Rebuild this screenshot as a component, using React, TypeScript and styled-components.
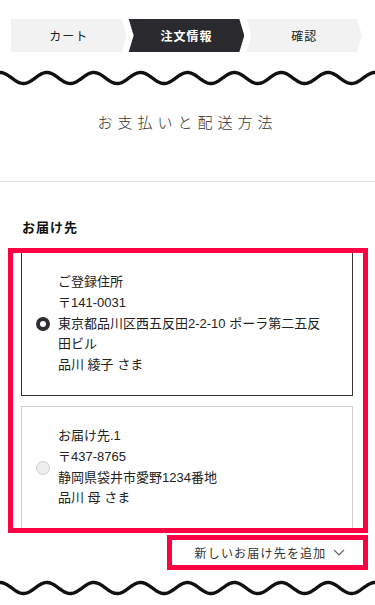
import styled, { createGlobalStyle } from "styled-components";

const GlobalStyle = createGlobalStyle`
  body {
    margin: 0;
    background: #fff;
    font-family: "Liberation Sans", "Noto Sans CJK JP", sans-serif;
    color: #222;
  }
`;

const Page = styled.div`
  width: 375px;
  display: flex;
  flex-direction: column;
`;

const Steps = styled.ol`
  display: flex;
  gap: 2px;
  margin: 19px 0 0;
  padding: 0 13px 0 11px;
  list-style: none;
`;

const Step = styled.li<{ $active?: boolean; $first?: boolean }>`
  flex: 1;
  height: 33px;
  display: flex;
  align-items: center;
  justify-content: center;
  font-size: 12px;
  letter-spacing: 1px;
  font-weight: ${(p) => (p.$active ? "bold" : "normal")};
  background: ${(p) => (p.$active ? "#2a2a2e" : "#f2f2f2")};
  color: ${(p) => (p.$active ? "#fff" : "#222")};
  clip-path: ${(p) =>
    p.$first
      ? "polygon(0 0, calc(100% - 5px) 0, 100% 50%, calc(100% - 5px) 100%, 0 100%)"
      : "polygon(0 0, calc(100% - 5px) 0, 100% 50%, calc(100% - 5px) 100%, 0 100%, 5px 50%)"};
`;

const WaveSvg = styled.svg<{ $top: number }>`
  display: block;
  margin-top: ${(p) => p.$top}px;
`;

const Title = styled.h1`
  margin: 25px 0 0;
  text-align: center;
  font-size: 15px;
  line-height: 20px;
  font-weight: 300;
  letter-spacing: 5px;
  color: #333;
`;

const Divider = styled.hr`
  margin: 48px 0 0;
  border: none;
  border-top: 1px solid #dcdcdc;
`;

const Heading = styled.h2`
  margin: 36px 0 0;
  padding-left: 22px;
  font-size: 13px;
  line-height: 20px;
  font-weight: bold;
  letter-spacing: 1px;
  color: #111;
`;

const Highlight = styled.div`
  margin: 10px 7px 0 8px;
  height: 285px;
  box-sizing: border-box;
  border: 5px solid #ff0045;
  padding: 0 10px 0 8px;
  overflow: hidden;
`;

const AddressList = styled.div`
  margin-top: -1px;
  display: flex;
  flex-direction: column;
  gap: 10px;
`;

const Card = styled.label<{ $selected?: boolean }>`
  display: flex;
  align-items: center;
  gap: 8px;
  padding: 19px 30px 19px 14px;
  border: 1px solid ${(p) => (p.$selected ? "#333" : "#cfcfcf")};
`;

const Radio = styled.span<{ $checked?: boolean }>`
  flex: none;
  width: 14px;
  height: 14px;
  box-sizing: border-box;
  border-radius: 50%;
  background: ${(p) => (p.$checked ? "#fff" : "#eeeeee")};
  border: ${(p) => (p.$checked ? "4.5px solid #2f2f33" : "1px solid #cfcfcf")};
`;

const Lines = styled.div`
  font-size: 13px;
  line-height: 20.8px;
  color: #222;
`;

const Line = styled.div``;

const ButtonRow = styled.div`
  display: flex;
  justify-content: flex-end;
  margin: 2px 7px 0 0;
`;

const AddButton = styled.button`
  width: 201px;
  height: 35px;
  box-sizing: border-box;
  border: 5px solid #ff0045;
  background: #fff;
  display: flex;
  align-items: center;
  justify-content: center;
  gap: 6px;
  font-family: inherit;
  font-size: 12px;
  letter-spacing: 1.2px;
  color: #333;
  padding: 0 0 0 4px;
`;

const Wave = ({ top }: { top: number }) => {
  const period = 375 / 8;
  const pts: string[] = [];
  for (let x = -2; x <= 377; x += 1) {
    const y = 10 - 5.5 * Math.cos((2 * Math.PI * x) / period);
    pts.push(`${x},${y.toFixed(2)}`);
  }
  return (
    <WaveSvg $top={top} width="375" height="20" viewBox="0 0 375 20">
      <polyline points={pts.join(" ")} fill="none" stroke="#111" strokeWidth="3.4" />
    </WaveSvg>
  );
};

const addresses = [
  {
    checked: true,
    lines: ["ご登録住所", "〒141-0031", "東京都品川区西五反田2-2-10 ポーラ第二五反田ビル", "品川 綾子 さま"],
  },
  {
    checked: false,
    lines: ["お届け先.1", "〒437-8765", "静岡県袋井市愛野1234番地", "品川 母 さま"],
  },
];

export default function App() {
  return (
    <>
      <GlobalStyle />
      <Page>
        <Steps>
          <Step $first>カート</Step>
          <Step $active>注文情報</Step>
          <Step>確認</Step>
        </Steps>
        <Wave top={16} />
        <Title>お支払いと配送方法</Title>
        <Divider />
        <Heading>お届け先</Heading>
        <Highlight>
          <AddressList>
            {addresses.map((a) => (
              <Card key={a.lines[0]} $selected={a.checked}>
                <Radio $checked={a.checked} />
                <Lines>
                  {a.lines.map((l) => (
                    <Line key={l}>{l}</Line>
                  ))}
                </Lines>
              </Card>
            ))}
          </AddressList>
        </Highlight>
        <ButtonRow>
          <AddButton>
            新しいお届け先を追加
            <svg width="12" height="7" viewBox="0 0 12 7">
              <polyline points="1,1 6,6 11,1" fill="none" stroke="#666" strokeWidth="1.2" />
            </svg>
          </AddButton>
        </ButtonRow>
        <Wave top={8} />
      </Page>
    </>
  );
}
